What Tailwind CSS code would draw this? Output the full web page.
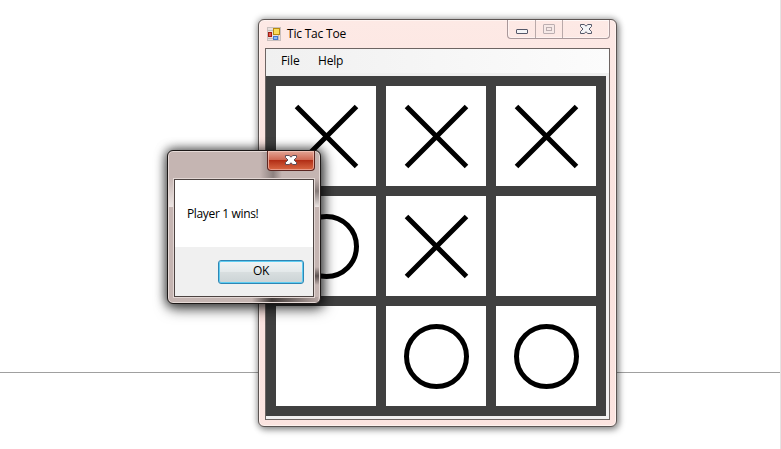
<!DOCTYPE html>
<html lang="en">
<head>
<meta charset="utf-8">
<title>Tic Tac Toe</title>
<script src="https://cdn.jsdelivr.net/npm/@tailwindcss/browser@4"></script>
</head>
<body class="bg-white overflow-hidden">
<svg class="hidden">
  <symbol id="x" viewBox="0 0 100 100"><path d="M20.500 20.500L80.500 80.500M80.500 20.500L20.500 80.500" stroke="#000" stroke-width="5" fill="none"/></symbol>
  <symbol id="o" viewBox="0 0 100 100"><circle cx="50.5" cy="50.5" r="30" stroke="#000" stroke-width="5" fill="none"/></symbol>
</svg>
<main class="relative w-[781px] h-[449px] overflow-hidden font-['Open_Sans','Noto_Sans',sans-serif] text-[12px] text-black border-r border-[#e4e4e4]">
  <div class="absolute left-0 top-[372px] w-[780px] h-px bg-[#a0a0a0]"></div>

  <!-- Game window -->
  <section class="absolute left-[258px] top-[19px] w-[359px] h-[408px] rounded-[6px] border border-[#5c5553] bg-[#fce6e2] bg-linear-to-b from-[#fde9e5] via-[#f9e2de] to-[#fce4e0] shadow-[0_0_6px_1px_rgba(0,0,0,0.32),2px_3px_7px_rgba(0,0,0,0.3),inset_0_0_0_1px_#fff3f0] px-[6px] pb-[6px] flex flex-col">
    <header class="h-[28px] shrink-0 flex items-start">
      <svg class="w-[14px] h-[14px] ml-[2px] mt-[7px]" viewBox="0 0 14 14">
        <rect x=".5" y=".5" width="13" height="13" fill="#e9dfdd" stroke="#c9bfbd"/>
        <path d="M1 3.500h5M1 11.500h5M11.500 8v5" stroke="#c4babb"/>
        <rect x="1.500" y="5.500" width="3" height="4" fill="#e05a48" stroke="#a21b14"/>
        <rect x="6.500" y="1.500" width="6" height="6" fill="#f9dc5c" stroke="#b88a10"/>
        <rect x="6.500" y="9.500" width="4" height="3" fill="#8ab8f6" stroke="#4479cc"/>
      </svg>
      <h1 class="ml-[6px] mt-[5px] leading-[18px] tracking-[-0.2px] whitespace-nowrap">Tic Tac Toe</h1>
      <div class="ml-auto w-[103px] h-[19px] rounded-b-[4px] border border-t-0 border-[#a9989a] flex divide-x divide-[#b9a9a9] shadow-[inset_0_0_0_1px_rgba(255,255,255,0.45)]">
        <span class="w-[28px] flex justify-center pt-[9px]"><svg class="w-[12px] h-[5px]" viewBox="0 0 12 5"><rect x=".5" y=".5" width="11" height="4" rx=".5" fill="#f4f4f6" stroke="#555869"/></svg></span>
        <span class="w-[27px] flex justify-center pt-[4px]"><svg class="w-[12px] h-[10px]" viewBox="0 0 12 10"><rect x=".5" y=".5" width="11" height="9" rx=".5" fill="#f6e9e7" stroke="#bbaeb0"/><rect x="3.500" y="3.500" width="5" height="3" fill="none" stroke="#bbaeb0"/></svg></span>
        <span class="flex-1 flex justify-center pt-[4px]"><svg class="w-[12px] h-[10px]" viewBox="0 0 12 10"><path d="M.5.500H4.200L6 2.200 7.800.5h3.700V2.500L9 5l2.500 2.500v2H7.800L6 7.800 4.200 9.500H.5v-2L3 5 .5 2.500z" fill="#f4f4f6" stroke="#555869"/></svg></span>
      </div>
    </header>
    <div class="w-[345px] h-[372px] border border-[#6d6462] bg-[#f1eff0] flex flex-col">
      <nav class="h-[27px] shrink-0 flex pl-[15px] pt-[3px] leading-[18px] bg-linear-to-r from-[#f0f0f0] to-[#fcfcfc] border-b-3 border-[#f0f0f0]">
        <span class="w-[37px] tracking-[-0.1px]">File</span><span class="tracking-[-0.2px]">Help</span>
      </nav>
      <div class="w-[340px] h-[340px] bg-[#404040] p-[10px] grid grid-cols-3 gap-[10px]">
        <svg class="size-[100px] bg-white"><use href="#x"/></svg>
        <svg class="size-[100px] bg-white"><use href="#x"/></svg>
        <svg class="size-[100px] bg-white"><use href="#x"/></svg>
        <svg class="size-[100px] bg-white"><use href="#o"/></svg>
        <svg class="size-[100px] bg-white"><use href="#x"/></svg>
        <div class="size-[100px] bg-white"></div>
        <div class="size-[100px] bg-white"></div>
        <svg class="size-[100px] bg-white"><use href="#o"/></svg>
        <svg class="size-[100px] bg-white"><use href="#o"/></svg>
      </div>
    </div>
  </section>

  <!-- Result dialog -->
  <section class="absolute left-[167px] top-[150px] w-[154px] h-[154px] rounded-[6px] border border-[#1c1817] bg-[#c5b5b2] shadow-[0_0_10px_2px_rgba(0,0,0,0.5),2px_4px_14px_1px_rgba(0,0,0,0.6),inset_0_0_0_1px_#e6dad7] px-[6px] flex flex-col">
    <div class="absolute left-px top-[27px] w-[5px] h-[29px] bg-linear-to-b from-[#c5b5b2] to-[#ece5e3]"></div>
    <div class="absolute right-px top-[27px] w-[5px] h-[29px] bg-linear-to-b from-[#c5b5b2] via-[#857a78] via-45% to-[#ece5e3]"></div>
    <div class="absolute right-px top-[116px] w-[5px] h-[18px] bg-linear-to-b from-[#c5b5b2] via-[#5a504e] to-[#c5b5b2]"></div>
    <div class="absolute left-[84px] bottom-px w-[66px] h-[5px] bg-linear-to-r from-[#c5b5b2] via-[#443c3a] via-30% to-[#b5a5a2]"></div>
    <div class="absolute left-[92px] top-px w-[22px] h-[26px] bg-linear-to-r from-transparent via-[#8d817f] via-60% to-transparent"></div>
    <header class="relative h-[28px] shrink-0 flex justify-end">
      <button class="w-[48px] h-[20px] -mr-px rounded-b-[4px] border border-t-0 border-[#5b2520] bg-linear-to-b from-[#e2a596] from-0% via-[#cf6a55] via-45% to-[#d2583c] shadow-[inset_0_0_0_1px_rgba(255,220,210,0.5)] flex justify-center pt-[4px]">
        <span class="absolute right-[1px] top-[9px] w-[44px] h-[9px] rounded-b-[3px] bg-linear-to-b from-[#b02a12] to-[#d5623f]"></span>
        <svg class="relative w-[12px] h-[10px]" viewBox="0 0 12 10"><path d="M.5.500H4.200L6 2.200 7.800.5h3.700V2.500L9 5l2.500 2.500v2H7.800L6 7.800 4.200 9.500H.5v-2L3 5 .5 2.500z" fill="#fff" stroke="#5e4e58"/></svg>
      </button>
    </header>
    <div class="relative w-[140px] h-[118px] border border-[#4c4341] shadow-[0_0_0_1px_#e3d7d4] bg-[#f0f0f0] flex flex-col">
      <p class="h-[67px] bg-white pl-[12px] pt-[25px] leading-[18px] tracking-[-0.35px] whitespace-nowrap">Player 1 wins!</p>
      <button class="ml-[43px] mt-[13px] w-[86px] h-[24px] rounded-[3px] border border-[#2f86b4] shadow-[inset_0_0_0_1px_#5fcdf2] bg-[linear-gradient(#f0f4f5_0%,#e4e9ea_48%,#d8dedf_52%,#cbd3d5_100%)] leading-[20px] pb-[2px] tracking-[-0.3px]">OK</button>
    </div>
  </section>
</main>
</body>
</html>
